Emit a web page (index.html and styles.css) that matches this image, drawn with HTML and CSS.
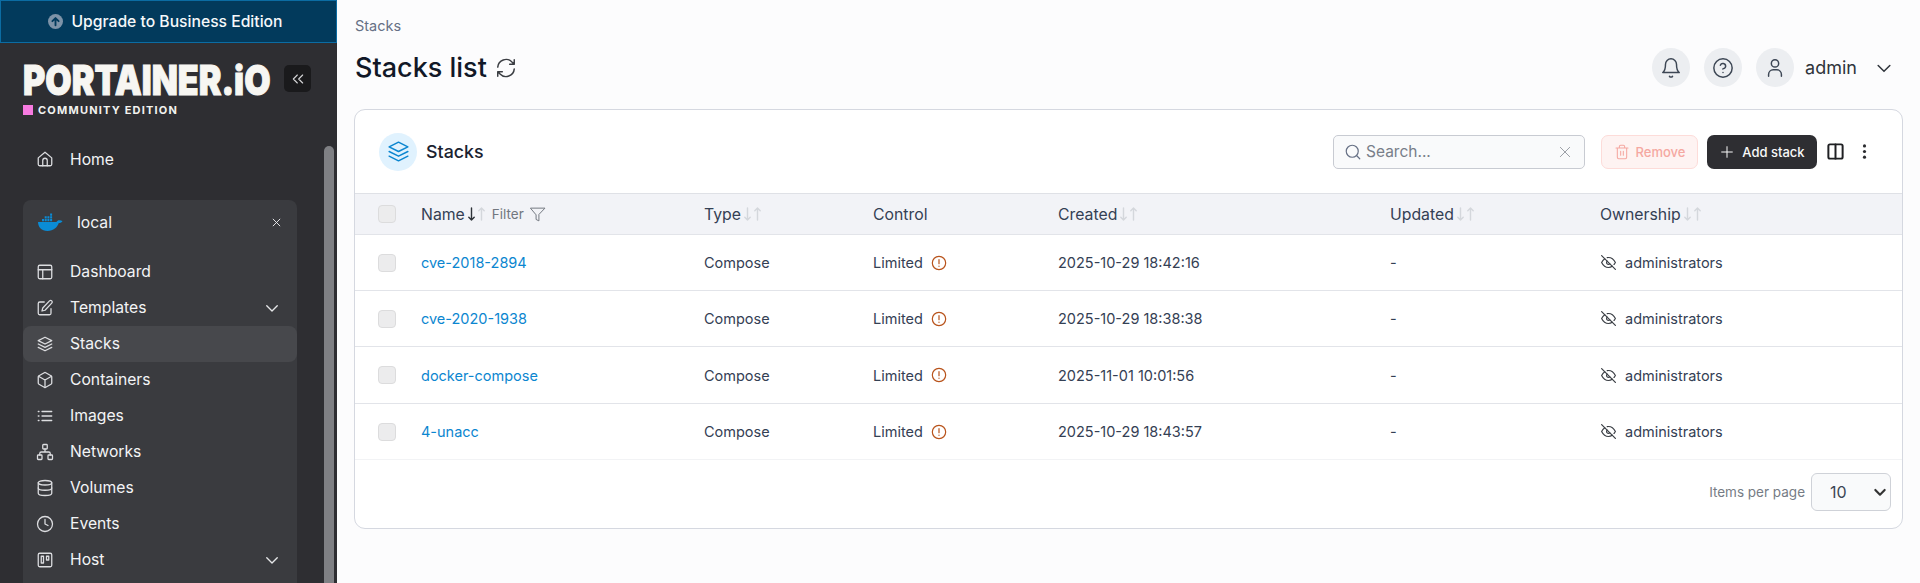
FILE: index.html
```html
<!DOCTYPE html>
<html lang="en">
<head>
<meta charset="utf-8">
<title>Stacks list</title>
<link rel="stylesheet" href="styles.css">
</head>
<body>
<svg class="defs" width="0" height="0" aria-hidden="true">
  <defs>
    <symbol id="i-stack" viewBox="0 0 24 24"><path d="M12 3 3 7.500 12 12l9-4.500z"/><path d="m3 12 9 4.500 9-4.500"/><path d="m3 16.500 9 4.500 9-4.500"/></symbol>
    <symbol id="i-chev" viewBox="0 0 24 24"><path d="m5 9 7 7 7-7"/></symbol>
    <symbol id="i-warn" viewBox="0 0 24 24"><circle cx="12" cy="12" r="10"/><path d="M12 7v6"/><path d="M12 16.500v.5"/></symbol>
    <symbol id="i-eyeoff" viewBox="0 0 24 24"><path d="M17.940 17.940A10.070 10.070 0 0 1 12 20c-7 0-11-8-11-8a18.450 18.450 0 0 1 5.060-5.940M9.900 4.240A9.120 9.120 0 0 1 12 4c7 0 11 8 11 8a18.500 18.500 0 0 1-2.160 3.190m-6.720-1.070a3 3 0 1 1-4.240-4.240"/><path d="M1 1l22 22"/></symbol>
    <symbol id="i-sort" viewBox="0 0 18 14"><path class="down" d="M3.500 1v12M.8 10.300l2.700 2.700 2.700-2.700"/><path class="up" d="M13.500 13V1M10.800 3.700 13.500 1l2.700 2.700"/></symbol>
  </defs>
</svg>
<div class="app">
  <aside class="sidebar">
    <a class="upgrade">
      <svg class="up-ic" viewBox="0 0 24 24"><circle cx="12" cy="12" r="12"/><path d="M12 18V7M7 11.500 12 6.500l5 5"/></svg>
      Upgrade to Business Edition
    </a>
    <div class="brand">
      <div class="brand-text">
        <div class="logo">PORTAINER.iO</div>
        <div class="edition"><span class="pink"></span>COMMUNITY EDITION</div>
      </div>
      <button class="collapse"><svg viewBox="0 0 24 24"><path d="m11 6-6 6 6 6M19 6l-6 6 6 6"/></svg></button>
    </div>
    <nav class="nav">
      <a class="item home"><svg class="ic" viewBox="0 0 24 24"><path d="M3 10.500 12 3l9 7.500V19a2 2 0 0 1-2 2H5a2 2 0 0 1-2-2z"/><path d="M9 21v-7a3 3 0 0 1 6 0v7"/></svg>Home</a>
      <section class="env">
        <div class="env-head">
          <svg class="docker" viewBox="0 0 26 18"><path class="whale" d="M1 9h18.500c.7-1.500 2-2 3.500-1.700l2.500 .7c-.8 1.500-2.200 2.200-3.700 2.100C20.300 14.500 16.500 18 10.500 18 4.500 18 1.300 14.500 1 9z"/><path class="bars" d="M5 6h2v2.300H5zM7.700 6h2v2.300h-2zM10.400 6h2v2.300h-2zM13.100 6h2v2.300h-2zM7.700 3.300h2v2.200h-2zM10.400 3.300h2v2.200h-2zM13.100 3.300h2v2.200h-2zM13.100 .6h2v2.200h-2z"/></svg>
          <span class="env-name">local</span>
          <svg class="close" viewBox="0 0 24 24"><path d="M3 3l18 18M21 3 3 21"/></svg>
        </div>
        <a class="item"><svg class="ic" viewBox="0 0 24 24"><rect x="3" y="3" width="18" height="18" rx="2"/><path d="M3 9h18M9 9v12"/></svg>Dashboard</a>
        <a class="item"><svg class="ic" viewBox="0 0 24 24"><path d="M20 13v6a2 2 0 0 1-2 2H5a2 2 0 0 1-2-2V6a2 2 0 0 1 2-2h6"/><path d="M18 2.500a2.100 2.100 0 0 1 3 3L12 15l-4 1 1-4z"/></svg>Templates<svg class="chev" ><use href="#i-chev"/></svg></a>
        <a class="item active"><svg class="ic"><use href="#i-stack"/></svg>Stacks</a>
        <a class="item"><svg class="ic" viewBox="0 0 24 24"><path d="M21 16V8a2 2 0 0 0-1-1.700l-7-4a2 2 0 0 0-2 0l-7 4A2 2 0 0 0 3 8v8a2 2 0 0 0 1 1.700l7 4a2 2 0 0 0 2 0l7-4a2 2 0 0 0 1-1.700z"/><path d="M3.300 7 12 12l8.700-5M12 22V12"/></svg>Containers</a>
        <a class="item"><svg class="ic" viewBox="0 0 24 24"><path d="M8 6h13M8 12h13M8 18h13M3 6h1M3 12h1M3 18h1"/></svg>Images</a>
        <a class="item"><svg class="ic" viewBox="0 0 24 24"><rect x="9" y="2" width="6" height="6" rx="1"/><rect x="2" y="16" width="6" height="6" rx="1"/><rect x="16" y="16" width="6" height="6" rx="1"/><path d="M12 8v4M5 16v-2a2 2 0 0 1 2-2h10a2 2 0 0 1 2 2v2"/></svg>Networks</a>
        <a class="item"><svg class="ic" viewBox="0 0 24 24"><ellipse cx="12" cy="5" rx="9" ry="3"/><path d="M3 5v14c0 1.700 4 3 9 3s9-1.300 9-3V5"/><path d="M3 12c0 1.700 4 3 9 3s9-1.300 9-3"/></svg>Volumes</a>
        <a class="item"><svg class="ic" viewBox="0 0 24 24"><circle cx="12" cy="12" r="10"/><path d="M12 6v6l4 2"/></svg>Events</a>
        <a class="item"><svg class="ic" viewBox="0 0 24 24"><rect x="3" y="3" width="18" height="18" rx="2"/><path d="M7 7h3v9H7zM14 7h3v5h-3z"/></svg>Host<svg class="chev"><use href="#i-chev"/></svg></a>
      </section>
    </nav>
    <div class="thumb"></div>
  </aside>
  <main class="main">
    <header class="topbar">
      <div>
        <div class="crumb">Stacks</div>
        <h1 class="title">Stacks list <svg class="refresh" viewBox="0 0 24 24"><path d="M3 11a9 9 0 0 1 15.500-5.500L21 8M21 3v5h-5"/><path d="M21 13a9 9 0 0 1-15.500 5.500L3 16M3 21v-5h5"/></svg></h1>
      </div>
      <div class="user-area">
        <span class="round"><svg viewBox="0 0 24 24"><path d="M6 8a6 6 0 0 1 12 0c0 7 3 9 3 9H3s3-2 3-9"/><path d="M10.300 21a2 2 0 0 0 3.400 0"/></svg></span>
        <span class="round"><svg viewBox="0 0 24 24"><circle cx="12" cy="12" r="10"/><path d="M9.100 9a3 3 0 0 1 5.800 1c0 2-3 3-3 3M12 17h.01"/></svg></span>
        <span class="round"><svg viewBox="0 0 24 24"><circle cx="12" cy="7" r="4"/><path d="M5 21v-2a5 5 0 0 1 5-5h4a5 5 0 0 1 5 5v2"/></svg></span>
        <span class="uname">admin</span>
        <svg class="uchev"><use href="#i-chev"/></svg>
      </div>
    </header>
    <section class="card">
      <div class="card-head">
        <span class="badge"><svg><use href="#i-stack"/></svg></span>
        <span class="card-title">Stacks</span>
        <div class="tools">
          <div class="search">
            <svg class="s-ic" viewBox="0 0 24 24"><circle cx="11" cy="11" r="8"/><path d="m21 21-4.300-4.300"/></svg>
            <span class="s-ph">Search...</span>
            <svg class="s-x" viewBox="0 0 24 24"><path d="M5 5l14 14M19 5 5 19"/></svg>
          </div>
          <button class="btn remove"><svg viewBox="0 0 24 24"><path d="M3 6h18M8 6V4a2 2 0 0 1 2-2h4a2 2 0 0 1 2 2v2M19 6v14a2 2 0 0 1-2 2H7a2 2 0 0 1-2-2V6M10 11v6M14 11v6"/></svg>Remove</button>
          <button class="btn add"><svg viewBox="0 0 24 24"><path d="M12 4v16M4 12h16"/></svg>Add stack</button>
          <svg class="cols" viewBox="0 0 24 24"><rect x="3" y="3" width="18" height="18" rx="2"/><path d="M12 3v18"/></svg>
          <svg class="dots" viewBox="0 0 4 16"><circle cx="2" cy="2" r="1.700"/><circle cx="2" cy="8" r="1.700"/><circle cx="2" cy="14" r="1.700"/></svg>
        </div>
      </div>
      <div class="row thead">
        <span class="check"></span>
        <span class="cell">Name<svg class="sort asc"><use href="#i-sort"/></svg><span class="filter">Filter<svg viewBox="0 0 24 24"><path d="M22 3H2l8 9.500V19l4 2v-8.500z"/></svg></span></span>
        <span class="cell">Type<svg class="sort"><use href="#i-sort"/></svg></span>
        <span class="cell">Control</span>
        <span class="cell">Created<svg class="sort"><use href="#i-sort"/></svg></span>
        <span class="cell">Updated<svg class="sort"><use href="#i-sort"/></svg></span>
        <span class="cell">Ownership<svg class="sort"><use href="#i-sort"/></svg></span>
      </div>
      <div class="row body">
        <span class="check"></span><a class="link">cve-2018-2894</a><span class="cell">Compose</span>
        <span class="cell">Limited<svg class="warn"><use href="#i-warn"/></svg></span><span class="cell">2025-10-29 18:42:16</span><span class="cell">-</span>
        <span class="cell"><svg class="eye"><use href="#i-eyeoff"/></svg>administrators</span>
      </div>
      <div class="row body">
        <span class="check"></span><a class="link">cve-2020-1938</a><span class="cell">Compose</span>
        <span class="cell">Limited<svg class="warn"><use href="#i-warn"/></svg></span><span class="cell">2025-10-29 18:38:38</span><span class="cell">-</span>
        <span class="cell"><svg class="eye"><use href="#i-eyeoff"/></svg>administrators</span>
      </div>
      <div class="row body tall">
        <span class="check"></span><a class="link">docker-compose</a><span class="cell">Compose</span>
        <span class="cell">Limited<svg class="warn"><use href="#i-warn"/></svg></span><span class="cell">2025-11-01 10:01:56</span><span class="cell">-</span>
        <span class="cell"><svg class="eye"><use href="#i-eyeoff"/></svg>administrators</span>
      </div>
      <div class="row body last">
        <span class="check"></span><a class="link">4-unacc</a><span class="cell">Compose</span>
        <span class="cell">Limited<svg class="warn"><use href="#i-warn"/></svg></span><span class="cell">2025-10-29 18:43:57</span><span class="cell">-</span>
        <span class="cell"><svg class="eye"><use href="#i-eyeoff"/></svg>administrators</span>
      </div>
      <div class="foot">
        <span class="ipp">Items per page</span>
        <div class="select">10<svg viewBox="0 0 24 24"><path d="m5 9 7 7 7-7"/></svg></div>
      </div>
    </section>
  </main>
</div>
</body>
</html>
```
FILE: styles.css
```css
* { box-sizing: border-box; }
html, body { margin: 0; height: 583px; overflow: hidden; }
body { font-family: Inter, "Liberation Sans", sans-serif; font-size: 14px; color: #303338; background: #fcfcfd; }
svg { fill: none; stroke: currentColor; stroke-width: 2; stroke-linecap: round; stroke-linejoin: round; flex: none; }
.defs { position: absolute; }
a { color: inherit; text-decoration: none; }
button { font: inherit; border: 0; padding: 0; }

.app { display: flex; height: 583px; }
.sidebar { position: relative; width: 337px; flex: none; background: #2e2e32; color: #f3f4f6; overflow: hidden; }
.upgrade { display: flex; align-items: center; justify-content: center; gap: 8px; height: 43px; padding-right: 6px; background: #023a5c; border: 1px solid #0b6ca3; color: #f5f8fa; font-size: 15.700px; font-weight: 500; }
.up-ic { width: 15px; height: 15px; stroke: none; }
.up-ic circle { fill: #7d93a8; }
.up-ic path { stroke: #023a5c; stroke-width: 3; }

.brand { display: flex; align-items: flex-start; padding: 22px 0 0 23px; height: 98px; }
.brand-text { width: 261px; }
.logo { font-size: 41px; font-weight: 900; line-height: 30px; height: 30px; color: #f7f6f2; white-space: nowrap; transform: scaleX(.83); transform-origin: left center; -webkit-text-stroke: 1px #f7f6f2; }
.edition { display: flex; align-items: center; gap: 5px; margin-top: 9px; font-size: 11px; font-weight: 700; letter-spacing: 1.200px; line-height: 12px; color: #f2f2ef; }
.pink { width: 10px; height: 10px; background: #f67ae0; }
.collapse { width: 27px; height: 27px; display: flex; align-items: center; justify-content: center; border-radius: 5px; background: #1a1a1c; color: #d8d8da; }
.collapse svg { width: 16px; height: 16px; stroke-width: 1.600; }

.nav { padding-left: 23px; }
.item { display: flex; align-items: center; height: 36px; padding-left: 13px; border-radius: 8px; width: 274px; font-size: 15.700px; color: #f3f4f6; }
.env .item { padding-bottom: 1px; }
.home { margin-bottom: 23px; }
.ic { width: 18px; height: 18px; margin-right: 16px; color: #dcdde0; stroke-width: 1.700; }
.chev { width: 18px; height: 18px; margin-left: auto; margin-right: 16px; color: #e6e7e9; stroke-width: 1.800; }
.env { width: 274px; background: #3a3b3f; border-radius: 8px; padding-bottom: 40px; }
.env-head { display: flex; align-items: center; height: 46px; padding: 0 0 2px 14px; margin-bottom: 8px; font-size: 15.700px; }
.docker { width: 26px; height: 18px; margin-right: 14px; stroke: none; }
.whale, .bars { fill: #0a8cd6; }
.env-name { flex: 1; }
.close { width: 9px; height: 9px; margin-right: 16px; stroke-width: 2.400; }
.active { background: #47484c; }

.thumb { position: absolute; left: 324px; top: 146px; width: 10px; height: 460px; background: #7f8084; border-radius: 5px; }

.main { flex: 1; min-width: 0; padding: 0 17px; }
.topbar { display: flex; justify-content: space-between; align-items: flex-start; height: 109px; }
.crumb { margin: 17px 0 0 1px; font-size: 14.500px; line-height: 17px; color: #667085; }
.title { display: flex; align-items: center; margin: 17px 0 0 1px; font-size: 27px; font-weight: 500; line-height: 34px; color: #111827; white-space: pre; }
.refresh { width: 22px; height: 22px; margin-left: 1px; color: #3a3d42; stroke-width: 1.600; }
.user-area { display: flex; align-items: center; margin-top: 48px; padding-right: 9px; }
.round { display: flex; align-items: center; justify-content: center; width: 38px; height: 39px; margin-right: 14px; border-radius: 50%; background: #eceef1; color: #3c4654; }
.round svg { width: 22px; height: 22px; stroke-width: 1.600; }
.uname { margin-left: -3px; font-size: 18px; color: #2f343b; }
.uchev { width: 20px; height: 20px; margin-left: 17px; color: #2f343b; stroke-width: 1.800; }

.card { width: 1549px; height: 420px; background: #fff; border: 1px solid #d5d8e0; border-radius: 11px; }
.card-head { display: flex; align-items: center; height: 83px; padding: 0 24px; }
.badge { display: flex; align-items: center; justify-content: center; width: 38px; height: 38px; border-radius: 50%; background: #e0f2fe; color: #0b86d0; }
.badge svg { width: 25px; height: 25px; stroke-width: 1.400; }
.card-title { margin-left: 9px; font-size: 17.800px; font-weight: 500; color: #1a2230; }
.tools { display: flex; align-items: center; margin-left: auto; }
.search { display: flex; align-items: center; width: 252px; height: 34px; padding: 0 11px 0 10px; border: 1px solid #c8cbd2; border-radius: 5px; background: #f9fafb; color: #667085; }
.s-ic { width: 18px; height: 18px; stroke-width: 1.600; }
.s-ph { margin-left: 4px; font-size: 15.500px; color: #787e89; }
.s-x { width: 16px; height: 16px; margin-left: auto; stroke-width: 1.300; color: #8c9199; }
.btn { display: flex; align-items: center; justify-content: center; height: 34px; border-radius: 7px; font-size: 13px; }
.remove { width: 97px; margin-left: 16px; background: #fef3f2; border: 1px solid #fddcd9; color: #f5a8a1; font-weight: 500; }
.remove svg { width: 16px; height: 16px; margin-right: 6px; stroke-width: 1.600; }
.add { width: 110px; margin-left: 9px; background: #2e2e32; color: #f8f8f8; font-weight: 500; }
.add svg { width: 16px; height: 16px; margin-right: 7px; stroke-width: 1.500; }
.cols { width: 19px; height: 19px; margin-left: 9px; color: #1f2023; stroke-width: 2.500; }
.dots { width: 5px; height: 15px; margin-left: 17px; margin-right: 11px; fill: #2a2b2e; stroke: none; }

.row { display: grid; grid-template-columns: 66px 283px 169px 185px 332px 210px 1fr; align-items: center; border-bottom: 1px solid #e2e4e9; font-size: 14.500px; color: #344054; }
.thead { height: 42px; background: #f2f3f7; border-top: 1px solid #dfe1e6; font-size: 15.800px; }
.body { height: 56px; }
.tall { height: 57px; }
.last { height: 56px; border-bottom-color: #f2f3f5; }
.check { width: 18px; height: 18px; margin-left: 23px; border: 1px solid #dcdcdd; border-radius: 4px; background: #ececed; }
.cell { display: flex; align-items: center; white-space: nowrap; }
.link { color: #0b86d0; }
.sort { width: 18px; height: 14px; margin-left: 3px; color: #d4d7dc; stroke-width: 1.400; }
.sort.asc { --down: #2e3238; }
.down { stroke: var(--down, currentColor); }
.filter { display: flex; align-items: center; margin-left: 6px; font-size: 13.500px; color: #72777f; }
.filter svg { width: 17px; height: 17px; margin-left: 5px; stroke-width: 1.400; }
.warn { width: 16px; height: 16px; margin-left: 8px; color: #b8531b; stroke-width: 1.800; }
.eye { width: 15px; height: 15px; margin-right: 9px; margin-left: 1px; color: #3b3f45; stroke-width: 1.900; }

.foot { display: flex; align-items: center; justify-content: flex-end; gap: 6px; padding: 13px 11px 0 0; }
.ipp { font-size: 13.500px; color: #767c85; }
.select { display: flex; align-items: center; justify-content: space-between; width: 80px; height: 38px; padding: 0 2px 0 18px; border: 1px solid #cfd2d8; border-radius: 6px; background: #f9fafb; font-size: 16px; color: #3c4654; }
.select svg { width: 16px; height: 16px; stroke-width: 3.200; color: #333; }
```
